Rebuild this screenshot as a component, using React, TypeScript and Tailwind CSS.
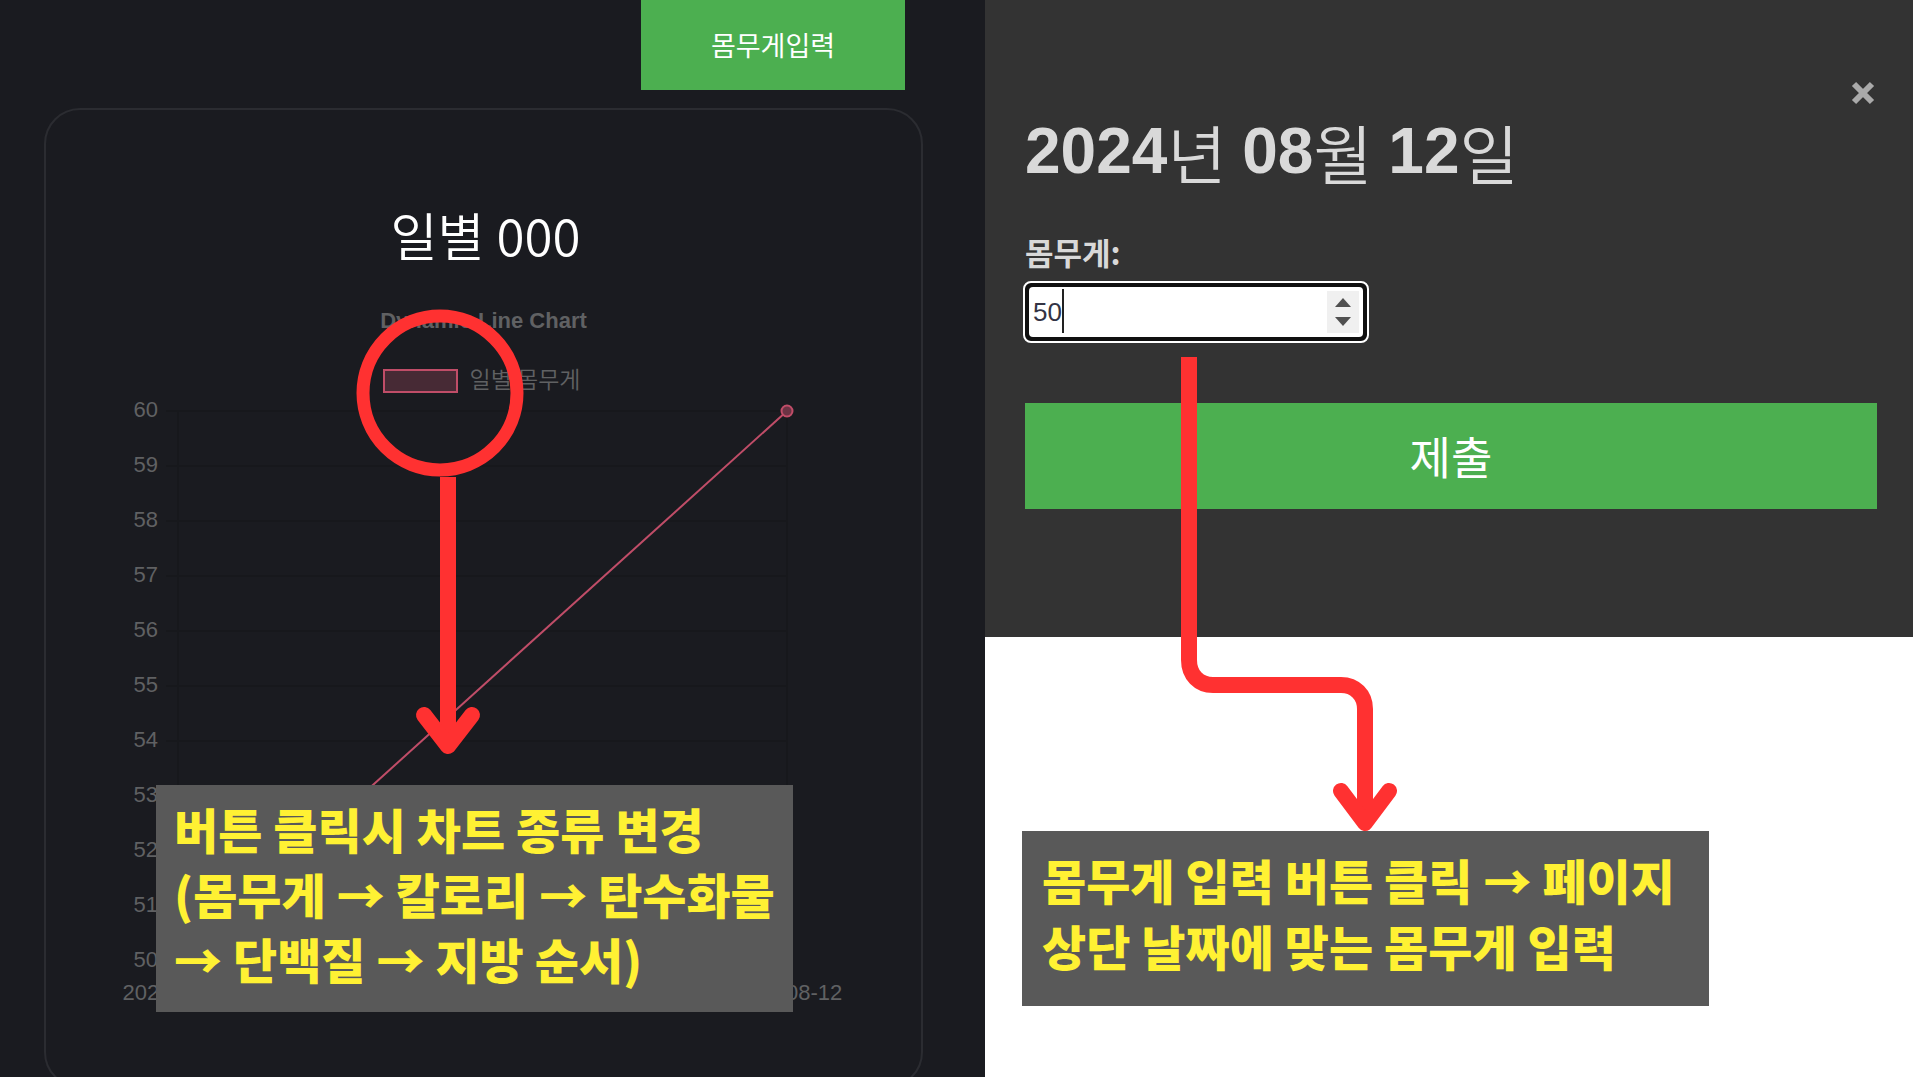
import { useState } from "react";

const DIGITS = "font-['Liberation_Sans',Arial,sans-serif]";
const HANGUL = "font-['Noto_Sans_CJK_KR',sans-serif]";

const ticks = [60, 59, 58, 57, 56, 55, 54, 53, 52, 51, 50];

function WeightChart() {
  return (
    <svg viewBox="0 0 875 640" className="block w-full" role="img" aria-label="일별 몸무게">
      <g stroke="#17181c" strokeWidth="2">
        {ticks.map((t, i) => (
          <line key={t} x1="120" x2="741" y1={13 + i * 55} y2={13 + i * 55} />
        ))}
        <line x1="132" x2="132" y1="13" y2="575" />
        <line x1="741" x2="741" y1="13" y2="575" />
      </g>
      <g fill="#606163" fontSize="22" fontFamily="'Liberation Sans', Arial, sans-serif">
        {ticks.map((t, i) => (
          <text key={t} x="112" y={19 + i * 55} textAnchor="end">
            {t}
          </text>
        ))}
        <text x="132" y="602" textAnchor="middle">2024-08-11</text>
        <text x="740" y="602" textAnchor="middle">2024-08-12</text>
      </g>
      <g stroke="#c04d68" strokeWidth="2">
        <line x1="132" y1="563" x2="741" y2="13" />
        <circle cx="132" cy="563" r="5.5" fill="#472a35" />
        <circle cx="741" cy="13" r="5.5" fill="#6b3344" />
      </g>
    </svg>
  );
}

function ChartPanel() {
  return (
    <section className="relative flex flex-col overflow-hidden bg-[#1a1b20] pl-11 pr-[62px]">
      <button
        type="button"
        className="mr-[18px] flex h-[90px] w-[264px] shrink-0 items-center justify-center self-end bg-[#4caf50] text-[27px] font-normal text-white"
      >
        몸무게입력
      </button>
      <div className="mt-[18px] h-[980px] shrink-0 rounded-[36px] border-2 border-[#2b2c31] pt-[92px]">
        <h2 className="flex h-16 items-center justify-center gap-3 pl-1 text-[51px] font-[350] text-white">
          <span>일별</span>
          <span>000</span>
        </h2>
        <p className={`${DIGITS} mt-[39px] text-center text-[22px] leading-8 font-bold text-[#606163]`}>
          Dynamic Line Chart
        </p>
        <div className="mt-[29px] flex h-8 items-start justify-center gap-3 pr-1">
          <span className="mt-[3px] h-6 w-[75px] border-2 border-[#c04d68] bg-[#472a35]" />
          <span className="text-[23px] leading-6 font-[350] text-[#606163]">일별 몸무게</span>
        </div>
        <WeightChart />
      </div>

      <svg
        className="pointer-events-none absolute top-[300px] left-[340px]"
        width="200"
        height="470"
        viewBox="0 0 200 470"
        fill="none"
        stroke="#ff3131"
        aria-hidden="true"
      >
        <circle cx="100" cy="93" r="77" strokeWidth="13" />
        <path d="M108 177V440" strokeWidth="16" />
        <path d="M84 415L108 446L132 415" strokeWidth="16" strokeLinecap="round" strokeLinejoin="round" />
      </svg>
      <p className="absolute top-[785px] left-[156px] h-[227px] w-[637px] bg-[#595959] px-[18px] pt-[11px] text-[48px] leading-[65px] font-black whitespace-nowrap text-[#fff133]">
        버튼 클릭시 차트 종류 변경
        <br />
        (몸무게 → 칼로리 → 탄수화물
        <br />→ 단백질 → 지방 순서)
      </p>
    </section>
  );
}

function WeightForm() {
  const [weight, setWeight] = useState(50);
  return (
    <form
      className="relative h-[637px] bg-[#333333] pt-[111px] pr-9 pl-10 text-[#d9d9d9]"
      onSubmit={(e) => e.preventDefault()}
    >
      <button
        type="button"
        aria-label="닫기"
        className="absolute top-[73px] right-[34px] flex h-10 w-8 items-center justify-center text-[#aaaaaa]"
      >
        <svg width="24" height="24" viewBox="0 0 24 24" stroke="currentColor" strokeWidth="6" aria-hidden="true">
          <path d="M3 3L21 21M21 3L3 21" />
        </svg>
      </button>
      <h1 className={`${DIGITS} flex h-20 items-center text-[64px] font-bold`}>
        2024<span className={`${HANGUL} mr-4 font-[350]`}>년</span>
        08<span className={`${HANGUL} mr-4 font-[350]`}>월</span>
        12<span className={`${HANGUL} font-[350]`}>일</span>
      </h1>
      <label htmlFor="weight" className="mt-[41px] block text-[31px] leading-10 font-bold">
        몸무게:
      </label>
      <div className="mt-[9px] -ml-0.5 flex h-[62px] w-[346px] items-center rounded-lg border-2 border-white bg-[#101010] p-1">
        <div className="relative flex h-full w-full items-center rounded-sm bg-white pr-1">
          <input
            id="weight"
            type="number"
            value={weight}
            onChange={(e) => setWeight(Number(e.target.value))}
            className={`${DIGITS} h-full min-w-0 flex-1 [appearance:textfield] bg-transparent pl-1 text-[26px] text-[#333344] outline-none [&::-webkit-inner-spin-button]:appearance-none`}
          />
          <span className="absolute top-0.5 left-[33px] h-11 w-0.5 bg-[#222222]" />
          <div className="flex h-[42px] w-8 flex-col items-center justify-center gap-2.5 bg-[#f0f0f0] text-[#505050]">
            <button type="button" aria-label="증가" onClick={() => setWeight(weight + 1)}>
              <svg className="block" width="16" height="9" viewBox="0 0 16 9" fill="currentColor">
                <path d="M8 0L16 9H0Z" />
              </svg>
            </button>
            <button type="button" aria-label="감소" onClick={() => setWeight(weight - 1)}>
              <svg className="block" width="16" height="9" viewBox="0 0 16 9" fill="currentColor">
                <path d="M0 0H16L8 9Z" />
              </svg>
            </button>
          </div>
        </div>
      </div>
      <button
        type="submit"
        className="mt-[60px] flex h-[106px] w-full items-center justify-center bg-[#4caf50] text-[45px] font-normal text-white"
      >
        제출
      </button>
    </form>
  );
}

export default function App() {
  return (
    <main className="grid h-screen grid-cols-[985fr_928fr] overflow-hidden bg-white font-['Noto_Sans_CJK_KR',sans-serif]">
      <ChartPanel />
      <section className="relative">
        <WeightForm />
        <svg
          className="pointer-events-none absolute top-[357px] left-[190px]"
          width="230"
          height="476"
          viewBox="0 0 230 476"
          fill="none"
          stroke="#ff3131"
          strokeWidth="16"
          aria-hidden="true"
        >
          <path d="M14 0V303C14 318 24 328 38 328H166C180 328 190 338 190 352V460" />
          <path d="M166 434L190 466L214 434" strokeLinecap="round" strokeLinejoin="round" />
        </svg>
        <p className="absolute top-[831px] left-[37px] h-[175px] w-[687px] bg-[#595959] px-5 pt-[15px] text-[48px] leading-[66px] font-black whitespace-nowrap text-[#fff133]">
          몸무게 입력 버튼 클릭 → 페이지
          <br />
          상단 날짜에 맞는 몸무게 입력
        </p>
      </section>
    </main>
  );
}
